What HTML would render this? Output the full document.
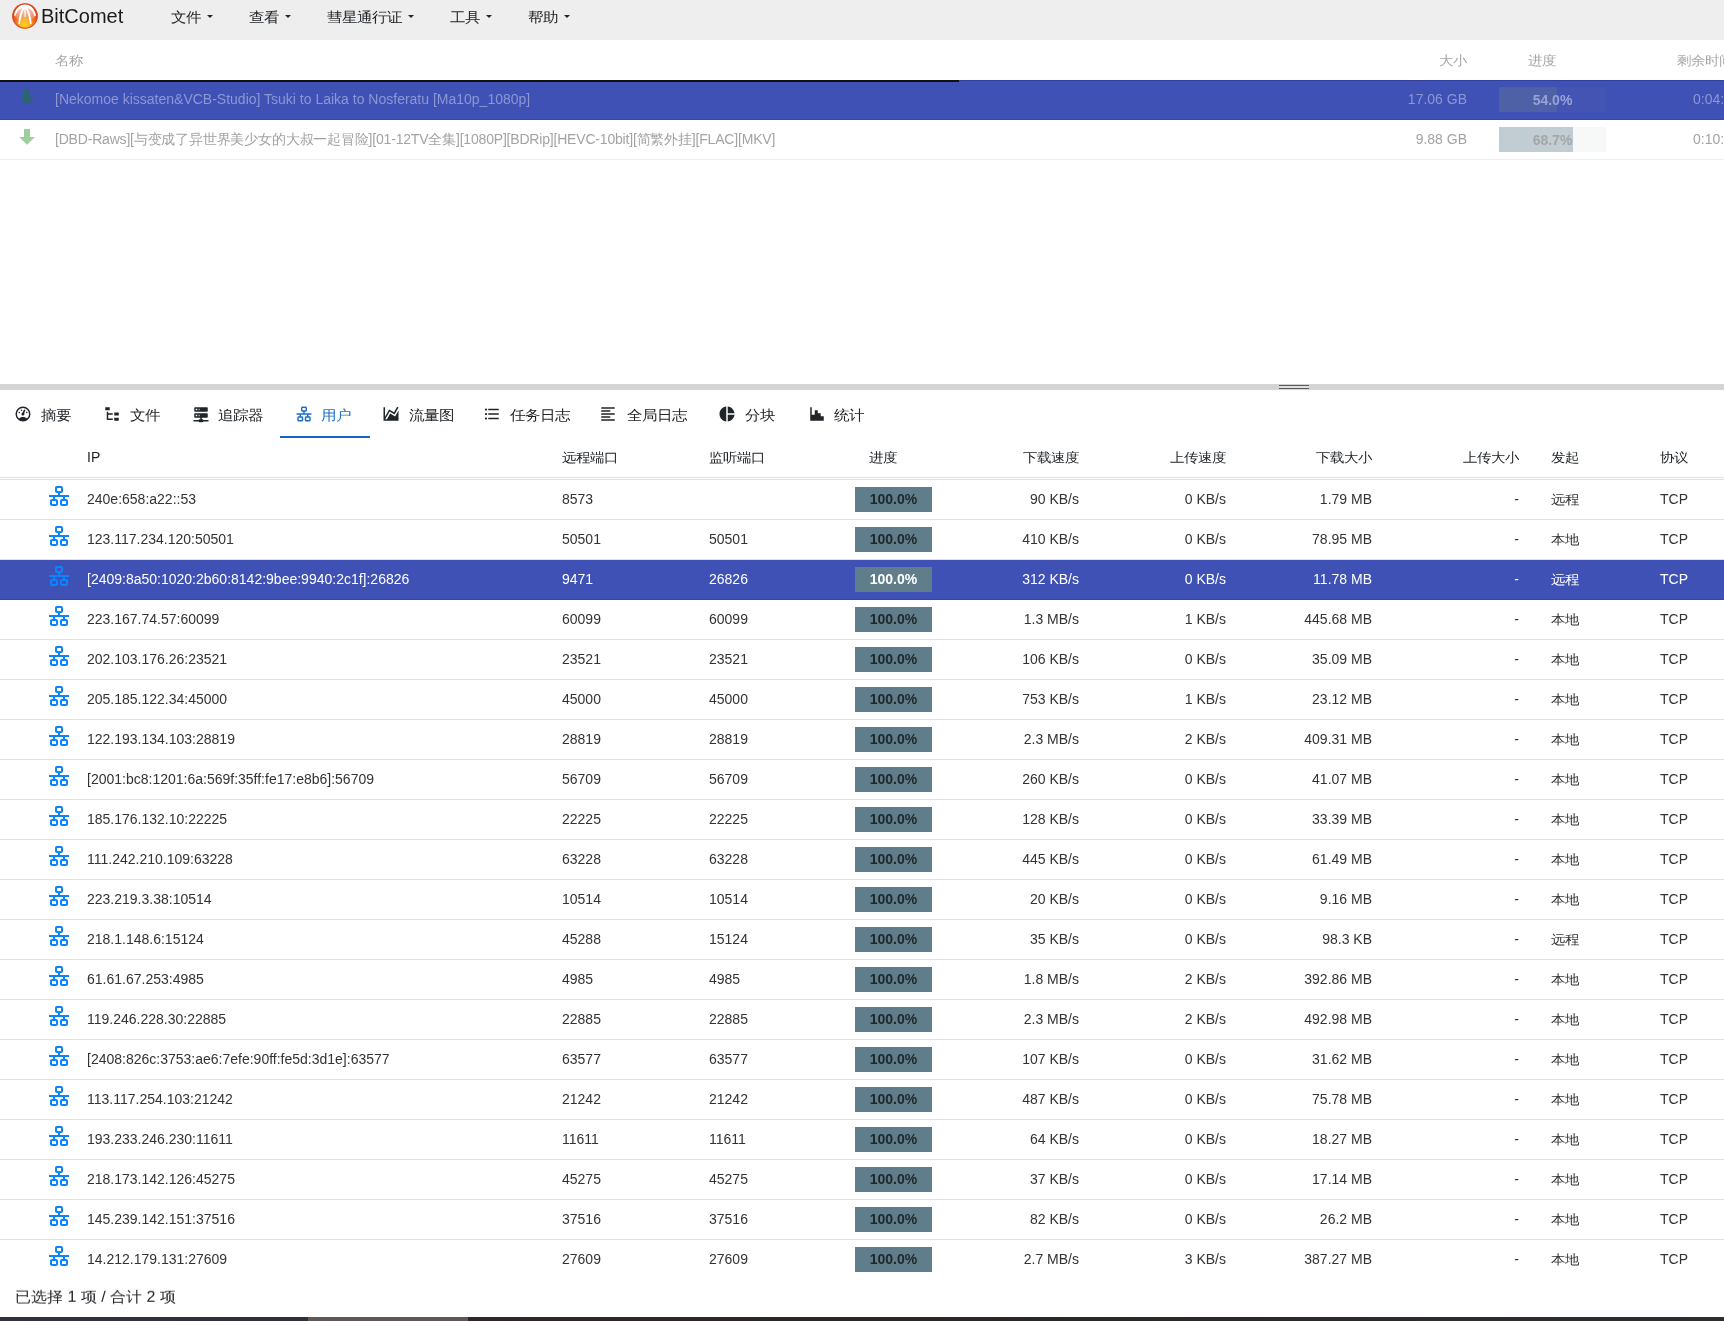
<!DOCTYPE html>
<html><head><meta charset="utf-8"><title>BitComet</title>
<style>
*{box-sizing:border-box;margin:0;padding:0}
html,body{width:1724px;height:1321px;overflow:hidden;background:#fff}
body{position:relative;font-family:"Liberation Sans",sans-serif;font-size:14px;color:#212529;-webkit-font-smoothing:antialiased}
#root{position:absolute;left:0;top:0;width:1724px;height:1321px;overflow:hidden;will-change:transform}
.abs{position:absolute;white-space:nowrap}
#nav{position:absolute;left:0;top:0;width:1724px;height:40px;background:#eeeeee}
#logo{position:absolute;left:12px;top:3px;width:26px;height:26px}
#brand{position:absolute;left:41px;top:4px;font-size:20px;line-height:24px;color:#1b1b1b}
.menu{position:absolute;top:8px;line-height:18px;font-size:15px;color:#212529}
.caret{display:inline-block;width:0;height:0;border-left:3px solid transparent;border-right:3px solid transparent;border-top:3.5px solid #212529;vertical-align:middle;margin-left:5.5px;position:relative;top:-2px}
#thead{position:absolute;left:0;top:40px;width:1724px;height:40px}
#thead span{position:absolute;top:12px;line-height:16px;color:#a6a6a6;white-space:nowrap}
#dragline{position:absolute;left:0;top:80px;width:959px;height:2px;background:#111}
.trow{position:absolute;left:0;width:1724px;height:40px}
.trow span{position:absolute;line-height:16px;top:11px;white-space:nowrap}
.tarrow{position:absolute;left:15px;width:24px;height:24px}
.tprog{position:absolute;left:1499px;top:7px;width:107px;height:25px}
.tprog .f{position:absolute;left:0;top:0;height:25px}
.tprog b{position:absolute;left:0;top:5px;width:107px;text-align:center;font-weight:bold;line-height:16px}
#split{position:absolute;left:0;top:384px;width:1724px;height:6px;background:#d4d4d4}
#grip{position:absolute;left:1279px;top:385px;width:30px;height:4px;border-top:1px solid #5a5a5a;border-bottom:1px solid #5a5a5a;background:#e0e0e0}
.tab{position:absolute;top:406px;height:18px;line-height:16px;white-space:nowrap}
.tab svg{position:absolute;top:0;width:16px;height:16px}
#uline{position:absolute;left:280px;top:436px;width:90px;height:2px;background:#1565c0}
#phead span{position:absolute;top:449px;line-height:16px;white-space:nowrap;color:#212529}
#hl1{position:absolute;left:0;top:477px;width:1724px;height:3px;border-top:1px solid #e0e0e0;border-bottom:1px solid #e0e0e0}
.row{position:absolute;left:0;width:1724px;height:40px;border-bottom:1px solid rgba(0,0,0,0.12);color:#333}
.row.sel{background:#3f51b5;color:#fff}
.pi{position:absolute;left:47px;top:4px;width:24px;height:24px;color:#0a84ff}
.row .c{position:absolute;top:11px;line-height:16px;white-space:nowrap}
.row .r{text-align:right}
.ip{left:87px}.rp{left:562px}.lp{left:709px}
.dl{right:645px}.ul{right:498px}.ds{right:352px}.us{right:205px}
.ori{left:1551px}.pr{left:1660px}
.pb{position:absolute;left:855px;top:7px;width:77px;height:25px;background:#607d8b;text-align:center;font-weight:bold;line-height:25px;color:#1e272c}
.row.sel .pb{color:#fff}
#foot{position:absolute;left:15px;top:1287px;line-height:20px;font-size:16px;color:#212529;transform:scaleY(0.92);transform-origin:0 60%}
#desk{position:absolute;left:0;top:1317px;width:1724px;height:4px;background:linear-gradient(90deg,#30333c 0px,#2f3139 308px,#615955 308px,#5f5854 468px,#302823 468px,#2d2724 900px,#2c2a2c 1300px,#2e2d30 1724px)}

#tline{position:absolute;left:959px;top:80px;width:765px;height:1px;background:#3041a0}

.cj{transform:scaleY(0.9);transform-origin:50% 55%}

.row.last{border-bottom:none}

</style></head>
<body><div id="root">
<div id="nav">
<svg id="logo" viewBox="0 0 26 26"><defs><radialGradient id="lg" cx="13" cy="21.5" r="14" gradientUnits="userSpaceOnUse"><stop offset="0" stop-color="#ffd82a"/><stop offset="0.3" stop-color="#fbb320"/><stop offset="0.65" stop-color="#ef7420"/><stop offset="1" stop-color="#e2461c"/></radialGradient><linearGradient id="lw" x1="0" y1="0" x2="0" y2="1"><stop offset="0" stop-color="#fff" stop-opacity="0.85"/><stop offset="0.5" stop-color="#fff" stop-opacity="0.5"/><stop offset="1" stop-color="#fff" stop-opacity="0"/></linearGradient></defs>
<circle cx="13" cy="13" r="12.4" fill="url(#lg)"/>
<path d="M2.5 14 C2.5 6 8 1.5 13 1.5 C18 1.5 23.5 6 23.5 14 C20 17 16 19 13 19 C10 19 6 17 2.5 14Z" fill="url(#lw)"/>
<g fill="#fff">
<path d="M13 1.4 C8 1.6 3 5.5 2 12.5 L3.6 12.8 C4.8 7.5 8.5 4.6 13 4.4Z"/>
<path d="M13 1.4 C18 1.6 23 5.5 24 12.8 L22.4 13 C21.2 7.6 17.5 4.6 13 4.4Z"/>
<path d="M11.4 3.6 C8.8 7.5 6.8 13 6.4 21 L8 21.2 C8.9 14 10.6 8.2 13 4.6Z"/>
<path d="M14.6 3.6 C17.2 7.5 19.2 13 19.6 21 L18 21.2 C17.1 14 15.4 8.2 13 4.6Z"/>
<path d="M12 3 L14 3 L13.6 14 L12.4 14Z" opacity="0.85"/>
</g>
<circle cx="13" cy="13" r="12.3" fill="none" stroke="#e0481c" stroke-width="1.1"/></svg>
<div id="brand">BitComet</div>
<div class="menu" style="left:171px"><span class="cj" style="display:inline-block">文件</span><i class="caret"></i></div>
<div class="menu" style="left:249px"><span class="cj" style="display:inline-block">查看</span><i class="caret"></i></div>
<div class="menu" style="left:327px"><span class="cj" style="display:inline-block">彗星通行证</span><i class="caret"></i></div>
<div class="menu" style="left:450px"><span class="cj" style="display:inline-block">工具</span><i class="caret"></i></div>
<div class="menu" style="left:528px"><span class="cj" style="display:inline-block">帮助</span><i class="caret"></i></div>
</div>
<div id="thead"><span class="cj" style="left:55px">名称</span><span class="cj" style="right:257px">大小</span><span class="cj" style="left:1528px">进度</span><span class="cj" style="left:1677px">剩余时间</span></div>
<div class="trow" style="top:80px;background:#3f51b5;border-bottom:1px solid #3949a8">
<svg class="tarrow" style="top:5px" viewBox="0 0 24 24"><path fill="#2a6670" d="M9 4h6v8h4.84L12 19.84 4.16 12H9z"/></svg>
<span style="left:55px;color:#8c97d3">[Nekomoe kissaten&amp;VCB-Studio] Tsuki to Laika to Nosferatu [Ma10p_1080p]</span>
<span style="right:257px;color:#8c97d3">17.06 GB</span>
<div class="tprog" style="background:#4354b3"><div class="f" style="width:58px;background:#4e60a6"></div><b style="color:#98a2d8">54.0%</b></div>
<span style="left:1693px;color:#8c97d3">0:04:</span>
</div>
<div class="trow" style="top:120px;border-bottom:1px solid #eeeeee">
<svg class="tarrow" style="top:5px" viewBox="0 0 24 24"><path fill="#9ccf9c" d="M9 4h6v8h4.84L12 19.84 4.16 12H9z"/></svg>
<span style="left:55px;color:#a3a3a3;letter-spacing:-0.19px">[DBD-Raws][与变成了异世界美少女的大叔一起冒险][01-12TV全集][1080P][BDRip][HEVC-10bit][简繁外挂][FLAC][MKV]</span>
<span style="right:257px;color:#a3a3a3">9.88 GB</span>
<div class="tprog" style="background:#f7f9f9"><div class="f" style="width:74px;background:#c1ccd3"></div><b style="color:#a6a6a6">68.7%</b></div>
<span style="left:1693px;color:#a3a3a3">0:10:</span>
</div>
<div id="dragline"></div><div id="tline"></div>
<div id="split"></div><div id="grip"></div>
<svg class="abs" style="left:14px;top:405px;width:18px;height:18px" viewBox="0 0 24 24"><path fill="#212529" d="M12 2A10 10 0 0 0 2 12a10 10 0 0 0 10 10 10 10 0 0 0 10-10A10 10 0 0 0 12 2m0 2a8 8 0 0 1 8 8c0 2.4-1 4.5-2.7 6-1.4-1.3-3.3-2-5.3-2s-3.8.7-5.3 2C5 16.5 4 14.4 4 12a8 8 0 0 1 8-8m2 1.89c-.38.01-.74.26-.9.65l-1.29 3.23-.1.23c-.71.13-1.3.6-1.57 1.26-.41 1.03.09 2.19 1.12 2.6s2.19-.09 2.6-1.12c.26-.66.14-1.42-.29-1.98l.1-.26 1.29-3.21.01-.03c.2-.51-.05-1.09-.56-1.3-.13-.05-.26-.07-.41-.07M10 6a1 1 0 0 0-1 1 1 1 0 0 0 1 1 1 1 0 0 0 1-1 1 1 0 0 0-1-1M7 9a1 1 0 0 0-1 1 1 1 0 0 0 1 1 1 1 0 0 0 1-1 1 1 0 0 0-1-1m10 0a1 1 0 0 0-1 1 1 1 0 0 0 1 1 1 1 0 0 0 1-1 1 1 0 0 0-1-1"/></svg><div class="abs cj" style="left:41px;top:406px;line-height:18px;font-size:15px;color:#212529">摘要</div>
<svg class="abs" style="left:103px;top:405px;width:18px;height:18px" viewBox="0 0 24 24"><path fill="#212529" d="M3 3h6v4H3zm12 7h6v4h-6zm0 7h6v4h-6zm-2-4H7v5h6v2H5V9h2v2h6z"/></svg><div class="abs cj" style="left:130px;top:406px;line-height:18px;font-size:15px;color:#212529">文件</div>
<svg class="abs" style="left:192px;top:405px;width:18px;height:18px" viewBox="0 0 24 24"><path fill="#212529" d="M13 19h1a1 1 0 0 1 1 1h7v2h-7a1 1 0 0 1-1 1h-4a1 1 0 0 1-1-1H2v-2h7a1 1 0 0 1 1-1h1v-2H4a1 1 0 0 1-1-1v-4a1 1 0 0 1 1-1h16a1 1 0 0 1 1 1v4a1 1 0 0 1-1 1h-7zM4 3h16a1 1 0 0 1 1 1v4a1 1 0 0 1-1 1H4a1 1 0 0 1-1-1V4a1 1 0 0 1 1-1m5 4h1V5H9zm0 8h1v-2H9zM5 5v2h2V5zm0 8v2h2v-2z"/></svg><div class="abs cj" style="left:218px;top:406px;line-height:18px;font-size:15px;color:#212529">追踪器</div>
<svg class="abs" style="left:295px;top:405px;width:18px;height:18px" viewBox="0 0 24 24"><path fill="#1e6fc8" d="M10 2c-1.11 0-2 .89-2 2v3c0 1.11.89 2 2 2h1v2H2v2h4v2H5c-1.11 0-2 .89-2 2v3c0 1.11.89 2 2 2h4c1.11 0 2-.89 2-2v-3c0-1.11-.89-2-2-2H8v-2h8v2h-1c-1.11 0-2 .89-2 2v3c0 1.11.89 2 2 2h4c1.11 0 2-.89 2-2v-3c0-1.11-.89-2-2-2h-1v-2h4v-2h-9V9h1c1.11 0 2-.89 2-2V4c0-1.11-.89-2-2-2zm0 2h4v3h-4zM5 17h4v3H5zm10 0h4v3h-4z"/></svg><div class="abs cj" style="left:321px;top:406px;line-height:18px;font-size:15px;color:#1e6fc8">用户</div>
<svg class="abs" style="left:382px;top:405px;width:18px;height:18px" viewBox="0 0 24 24"><path fill="#212529" d="M17.45 15.18 22 7.31V21H2V3h2v12.54L9.5 6 16 9.78l4.24-7.33 1.73 1-5.23 9.05-6.51-3.75L4.31 19h2.26l4.39-7.56z"/></svg><div class="abs cj" style="left:409px;top:406px;line-height:18px;font-size:15px;color:#212529">流量图</div>
<svg class="abs" style="left:483px;top:405px;width:18px;height:18px" viewBox="0 0 24 24"><path fill="#212529" d="M7 5h14v2H7zm0 8v-2h14v2zM4 4.5A1.5 1.5 0 0 1 5.5 6 1.5 1.5 0 0 1 4 7.5 1.5 1.5 0 0 1 2.5 6 1.5 1.5 0 0 1 4 4.5m0 6A1.5 1.5 0 0 1 5.5 12 1.5 1.5 0 0 1 4 13.5 1.5 1.5 0 0 1 2.5 12 1.5 1.5 0 0 1 4 10.5M7 19v-2h14v2zm-3-2.5A1.5 1.5 0 0 1 5.5 18 1.5 1.5 0 0 1 4 19.5 1.5 1.5 0 0 1 2.5 18 1.5 1.5 0 0 1 4 16.5"/></svg><div class="abs cj" style="left:510px;top:406px;line-height:18px;font-size:15px;color:#212529">任务日志</div>
<svg class="abs" style="left:599px;top:405px;width:18px;height:18px" viewBox="0 0 24 24"><path fill="#212529" d="M3 3h18v2H3zm0 4h12v2H3zm0 4h18v2H3zm0 4h12v2H3zm0 4h18v2H3z"/></svg><div class="abs cj" style="left:627px;top:406px;line-height:18px;font-size:15px;color:#212529">全局日志</div>
<svg class="abs" style="left:718px;top:405px;width:18px;height:18px" viewBox="0 0 24 24"><path fill="#212529" d="M11 2v20c-5.1-.5-9-4.8-9-10s3.9-9.5 9-10m2 0v9h9c-.5-4.8-4.2-8.5-9-9m0 11v9c4.7-.5 8.5-4.2 9-9z"/></svg><div class="abs cj" style="left:745px;top:406px;line-height:18px;font-size:15px;color:#212529">分块</div>
<svg class="abs" style="left:808px;top:405px;width:18px;height:18px" viewBox="0 0 24 24"><path fill="#212529" d="M3 3h2v10h4V7h4v4h4v4h4v6H3z"/></svg><div class="abs cj" style="left:834px;top:406px;line-height:18px;font-size:15px;color:#212529">统计</div>

<div id="uline"></div>
<div id="phead"><span style="left:87px">IP</span><span class="cj" style="left:562px">远程端口</span><span class="cj" style="left:709px">监听端口</span><span class="cj" style="left:869px">进度</span><span class="cj" style="right:645px">下载速度</span><span class="cj" style="right:498px">上传速度</span><span class="cj" style="right:352px">下载大小</span><span class="cj" style="right:205px">上传大小</span><span class="cj" style="left:1551px">发起</span><span class="cj" style="left:1660px">协议</span></div>
<div id="hl1"></div>
<div class="row" style="top:480px"><svg class="pi" viewBox="0 0 24 24"><path fill="currentColor" d="M10 2c-1.11 0-2 .89-2 2v3c0 1.11.89 2 2 2h1v2H2v2h4v2H5c-1.11 0-2 .89-2 2v3c0 1.11.89 2 2 2h4c1.11 0 2-.89 2-2v-3c0-1.11-.89-2-2-2H8v-2h8v2h-1c-1.11 0-2 .89-2 2v3c0 1.11.89 2 2 2h4c1.11 0 2-.89 2-2v-3c0-1.11-.89-2-2-2h-1v-2h4v-2h-9V9h1c1.11 0 2-.89 2-2V4c0-1.11-.89-2-2-2zm0 2h4v3h-4zM5 17h4v3H5zm10 0h4v3h-4z"/></svg><span class="c ip">240e:658:a22::53</span><span class="c rp">8573</span><span class="c lp"></span><span class="pb">100.0%</span><span class="c r dl">90 KB/s</span><span class="c r ul">0 KB/s</span><span class="c r ds">1.79 MB</span><span class="c r us">-</span><span class="c ori cj">远程</span><span class="c pr">TCP</span></div>
<div class="row" style="top:520px"><svg class="pi" viewBox="0 0 24 24"><path fill="currentColor" d="M10 2c-1.11 0-2 .89-2 2v3c0 1.11.89 2 2 2h1v2H2v2h4v2H5c-1.11 0-2 .89-2 2v3c0 1.11.89 2 2 2h4c1.11 0 2-.89 2-2v-3c0-1.11-.89-2-2-2H8v-2h8v2h-1c-1.11 0-2 .89-2 2v3c0 1.11.89 2 2 2h4c1.11 0 2-.89 2-2v-3c0-1.11-.89-2-2-2h-1v-2h4v-2h-9V9h1c1.11 0 2-.89 2-2V4c0-1.11-.89-2-2-2zm0 2h4v3h-4zM5 17h4v3H5zm10 0h4v3h-4z"/></svg><span class="c ip">123.117.234.120:50501</span><span class="c rp">50501</span><span class="c lp">50501</span><span class="pb">100.0%</span><span class="c r dl">410 KB/s</span><span class="c r ul">0 KB/s</span><span class="c r ds">78.95 MB</span><span class="c r us">-</span><span class="c ori cj">本地</span><span class="c pr">TCP</span></div>
<div class="row sel" style="top:560px"><svg class="pi" viewBox="0 0 24 24"><path fill="currentColor" d="M10 2c-1.11 0-2 .89-2 2v3c0 1.11.89 2 2 2h1v2H2v2h4v2H5c-1.11 0-2 .89-2 2v3c0 1.11.89 2 2 2h4c1.11 0 2-.89 2-2v-3c0-1.11-.89-2-2-2H8v-2h8v2h-1c-1.11 0-2 .89-2 2v3c0 1.11.89 2 2 2h4c1.11 0 2-.89 2-2v-3c0-1.11-.89-2-2-2h-1v-2h4v-2h-9V9h1c1.11 0 2-.89 2-2V4c0-1.11-.89-2-2-2zm0 2h4v3h-4zM5 17h4v3H5zm10 0h4v3h-4z"/></svg><span class="c ip">[2409:8a50:1020:2b60:8142:9bee:9940:2c1f]:26826</span><span class="c rp">9471</span><span class="c lp">26826</span><span class="pb">100.0%</span><span class="c r dl">312 KB/s</span><span class="c r ul">0 KB/s</span><span class="c r ds">11.78 MB</span><span class="c r us">-</span><span class="c ori cj">远程</span><span class="c pr">TCP</span></div>
<div class="row" style="top:600px"><svg class="pi" viewBox="0 0 24 24"><path fill="currentColor" d="M10 2c-1.11 0-2 .89-2 2v3c0 1.11.89 2 2 2h1v2H2v2h4v2H5c-1.11 0-2 .89-2 2v3c0 1.11.89 2 2 2h4c1.11 0 2-.89 2-2v-3c0-1.11-.89-2-2-2H8v-2h8v2h-1c-1.11 0-2 .89-2 2v3c0 1.11.89 2 2 2h4c1.11 0 2-.89 2-2v-3c0-1.11-.89-2-2-2h-1v-2h4v-2h-9V9h1c1.11 0 2-.89 2-2V4c0-1.11-.89-2-2-2zm0 2h4v3h-4zM5 17h4v3H5zm10 0h4v3h-4z"/></svg><span class="c ip">223.167.74.57:60099</span><span class="c rp">60099</span><span class="c lp">60099</span><span class="pb">100.0%</span><span class="c r dl">1.3 MB/s</span><span class="c r ul">1 KB/s</span><span class="c r ds">445.68 MB</span><span class="c r us">-</span><span class="c ori cj">本地</span><span class="c pr">TCP</span></div>
<div class="row" style="top:640px"><svg class="pi" viewBox="0 0 24 24"><path fill="currentColor" d="M10 2c-1.11 0-2 .89-2 2v3c0 1.11.89 2 2 2h1v2H2v2h4v2H5c-1.11 0-2 .89-2 2v3c0 1.11.89 2 2 2h4c1.11 0 2-.89 2-2v-3c0-1.11-.89-2-2-2H8v-2h8v2h-1c-1.11 0-2 .89-2 2v3c0 1.11.89 2 2 2h4c1.11 0 2-.89 2-2v-3c0-1.11-.89-2-2-2h-1v-2h4v-2h-9V9h1c1.11 0 2-.89 2-2V4c0-1.11-.89-2-2-2zm0 2h4v3h-4zM5 17h4v3H5zm10 0h4v3h-4z"/></svg><span class="c ip">202.103.176.26:23521</span><span class="c rp">23521</span><span class="c lp">23521</span><span class="pb">100.0%</span><span class="c r dl">106 KB/s</span><span class="c r ul">0 KB/s</span><span class="c r ds">35.09 MB</span><span class="c r us">-</span><span class="c ori cj">本地</span><span class="c pr">TCP</span></div>
<div class="row" style="top:680px"><svg class="pi" viewBox="0 0 24 24"><path fill="currentColor" d="M10 2c-1.11 0-2 .89-2 2v3c0 1.11.89 2 2 2h1v2H2v2h4v2H5c-1.11 0-2 .89-2 2v3c0 1.11.89 2 2 2h4c1.11 0 2-.89 2-2v-3c0-1.11-.89-2-2-2H8v-2h8v2h-1c-1.11 0-2 .89-2 2v3c0 1.11.89 2 2 2h4c1.11 0 2-.89 2-2v-3c0-1.11-.89-2-2-2h-1v-2h4v-2h-9V9h1c1.11 0 2-.89 2-2V4c0-1.11-.89-2-2-2zm0 2h4v3h-4zM5 17h4v3H5zm10 0h4v3h-4z"/></svg><span class="c ip">205.185.122.34:45000</span><span class="c rp">45000</span><span class="c lp">45000</span><span class="pb">100.0%</span><span class="c r dl">753 KB/s</span><span class="c r ul">1 KB/s</span><span class="c r ds">23.12 MB</span><span class="c r us">-</span><span class="c ori cj">本地</span><span class="c pr">TCP</span></div>
<div class="row" style="top:720px"><svg class="pi" viewBox="0 0 24 24"><path fill="currentColor" d="M10 2c-1.11 0-2 .89-2 2v3c0 1.11.89 2 2 2h1v2H2v2h4v2H5c-1.11 0-2 .89-2 2v3c0 1.11.89 2 2 2h4c1.11 0 2-.89 2-2v-3c0-1.11-.89-2-2-2H8v-2h8v2h-1c-1.11 0-2 .89-2 2v3c0 1.11.89 2 2 2h4c1.11 0 2-.89 2-2v-3c0-1.11-.89-2-2-2h-1v-2h4v-2h-9V9h1c1.11 0 2-.89 2-2V4c0-1.11-.89-2-2-2zm0 2h4v3h-4zM5 17h4v3H5zm10 0h4v3h-4z"/></svg><span class="c ip">122.193.134.103:28819</span><span class="c rp">28819</span><span class="c lp">28819</span><span class="pb">100.0%</span><span class="c r dl">2.3 MB/s</span><span class="c r ul">2 KB/s</span><span class="c r ds">409.31 MB</span><span class="c r us">-</span><span class="c ori cj">本地</span><span class="c pr">TCP</span></div>
<div class="row" style="top:760px"><svg class="pi" viewBox="0 0 24 24"><path fill="currentColor" d="M10 2c-1.11 0-2 .89-2 2v3c0 1.11.89 2 2 2h1v2H2v2h4v2H5c-1.11 0-2 .89-2 2v3c0 1.11.89 2 2 2h4c1.11 0 2-.89 2-2v-3c0-1.11-.89-2-2-2H8v-2h8v2h-1c-1.11 0-2 .89-2 2v3c0 1.11.89 2 2 2h4c1.11 0 2-.89 2-2v-3c0-1.11-.89-2-2-2h-1v-2h4v-2h-9V9h1c1.11 0 2-.89 2-2V4c0-1.11-.89-2-2-2zm0 2h4v3h-4zM5 17h4v3H5zm10 0h4v3h-4z"/></svg><span class="c ip">[2001:bc8:1201:6a:569f:35ff:fe17:e8b6]:56709</span><span class="c rp">56709</span><span class="c lp">56709</span><span class="pb">100.0%</span><span class="c r dl">260 KB/s</span><span class="c r ul">0 KB/s</span><span class="c r ds">41.07 MB</span><span class="c r us">-</span><span class="c ori cj">本地</span><span class="c pr">TCP</span></div>
<div class="row" style="top:800px"><svg class="pi" viewBox="0 0 24 24"><path fill="currentColor" d="M10 2c-1.11 0-2 .89-2 2v3c0 1.11.89 2 2 2h1v2H2v2h4v2H5c-1.11 0-2 .89-2 2v3c0 1.11.89 2 2 2h4c1.11 0 2-.89 2-2v-3c0-1.11-.89-2-2-2H8v-2h8v2h-1c-1.11 0-2 .89-2 2v3c0 1.11.89 2 2 2h4c1.11 0 2-.89 2-2v-3c0-1.11-.89-2-2-2h-1v-2h4v-2h-9V9h1c1.11 0 2-.89 2-2V4c0-1.11-.89-2-2-2zm0 2h4v3h-4zM5 17h4v3H5zm10 0h4v3h-4z"/></svg><span class="c ip">185.176.132.10:22225</span><span class="c rp">22225</span><span class="c lp">22225</span><span class="pb">100.0%</span><span class="c r dl">128 KB/s</span><span class="c r ul">0 KB/s</span><span class="c r ds">33.39 MB</span><span class="c r us">-</span><span class="c ori cj">本地</span><span class="c pr">TCP</span></div>
<div class="row" style="top:840px"><svg class="pi" viewBox="0 0 24 24"><path fill="currentColor" d="M10 2c-1.11 0-2 .89-2 2v3c0 1.11.89 2 2 2h1v2H2v2h4v2H5c-1.11 0-2 .89-2 2v3c0 1.11.89 2 2 2h4c1.11 0 2-.89 2-2v-3c0-1.11-.89-2-2-2H8v-2h8v2h-1c-1.11 0-2 .89-2 2v3c0 1.11.89 2 2 2h4c1.11 0 2-.89 2-2v-3c0-1.11-.89-2-2-2h-1v-2h4v-2h-9V9h1c1.11 0 2-.89 2-2V4c0-1.11-.89-2-2-2zm0 2h4v3h-4zM5 17h4v3H5zm10 0h4v3h-4z"/></svg><span class="c ip">111.242.210.109:63228</span><span class="c rp">63228</span><span class="c lp">63228</span><span class="pb">100.0%</span><span class="c r dl">445 KB/s</span><span class="c r ul">0 KB/s</span><span class="c r ds">61.49 MB</span><span class="c r us">-</span><span class="c ori cj">本地</span><span class="c pr">TCP</span></div>
<div class="row" style="top:880px"><svg class="pi" viewBox="0 0 24 24"><path fill="currentColor" d="M10 2c-1.11 0-2 .89-2 2v3c0 1.11.89 2 2 2h1v2H2v2h4v2H5c-1.11 0-2 .89-2 2v3c0 1.11.89 2 2 2h4c1.11 0 2-.89 2-2v-3c0-1.11-.89-2-2-2H8v-2h8v2h-1c-1.11 0-2 .89-2 2v3c0 1.11.89 2 2 2h4c1.11 0 2-.89 2-2v-3c0-1.11-.89-2-2-2h-1v-2h4v-2h-9V9h1c1.11 0 2-.89 2-2V4c0-1.11-.89-2-2-2zm0 2h4v3h-4zM5 17h4v3H5zm10 0h4v3h-4z"/></svg><span class="c ip">223.219.3.38:10514</span><span class="c rp">10514</span><span class="c lp">10514</span><span class="pb">100.0%</span><span class="c r dl">20 KB/s</span><span class="c r ul">0 KB/s</span><span class="c r ds">9.16 MB</span><span class="c r us">-</span><span class="c ori cj">本地</span><span class="c pr">TCP</span></div>
<div class="row" style="top:920px"><svg class="pi" viewBox="0 0 24 24"><path fill="currentColor" d="M10 2c-1.11 0-2 .89-2 2v3c0 1.11.89 2 2 2h1v2H2v2h4v2H5c-1.11 0-2 .89-2 2v3c0 1.11.89 2 2 2h4c1.11 0 2-.89 2-2v-3c0-1.11-.89-2-2-2H8v-2h8v2h-1c-1.11 0-2 .89-2 2v3c0 1.11.89 2 2 2h4c1.11 0 2-.89 2-2v-3c0-1.11-.89-2-2-2h-1v-2h4v-2h-9V9h1c1.11 0 2-.89 2-2V4c0-1.11-.89-2-2-2zm0 2h4v3h-4zM5 17h4v3H5zm10 0h4v3h-4z"/></svg><span class="c ip">218.1.148.6:15124</span><span class="c rp">45288</span><span class="c lp">15124</span><span class="pb">100.0%</span><span class="c r dl">35 KB/s</span><span class="c r ul">0 KB/s</span><span class="c r ds">98.3 KB</span><span class="c r us">-</span><span class="c ori cj">远程</span><span class="c pr">TCP</span></div>
<div class="row" style="top:960px"><svg class="pi" viewBox="0 0 24 24"><path fill="currentColor" d="M10 2c-1.11 0-2 .89-2 2v3c0 1.11.89 2 2 2h1v2H2v2h4v2H5c-1.11 0-2 .89-2 2v3c0 1.11.89 2 2 2h4c1.11 0 2-.89 2-2v-3c0-1.11-.89-2-2-2H8v-2h8v2h-1c-1.11 0-2 .89-2 2v3c0 1.11.89 2 2 2h4c1.11 0 2-.89 2-2v-3c0-1.11-.89-2-2-2h-1v-2h4v-2h-9V9h1c1.11 0 2-.89 2-2V4c0-1.11-.89-2-2-2zm0 2h4v3h-4zM5 17h4v3H5zm10 0h4v3h-4z"/></svg><span class="c ip">61.61.67.253:4985</span><span class="c rp">4985</span><span class="c lp">4985</span><span class="pb">100.0%</span><span class="c r dl">1.8 MB/s</span><span class="c r ul">2 KB/s</span><span class="c r ds">392.86 MB</span><span class="c r us">-</span><span class="c ori cj">本地</span><span class="c pr">TCP</span></div>
<div class="row" style="top:1000px"><svg class="pi" viewBox="0 0 24 24"><path fill="currentColor" d="M10 2c-1.11 0-2 .89-2 2v3c0 1.11.89 2 2 2h1v2H2v2h4v2H5c-1.11 0-2 .89-2 2v3c0 1.11.89 2 2 2h4c1.11 0 2-.89 2-2v-3c0-1.11-.89-2-2-2H8v-2h8v2h-1c-1.11 0-2 .89-2 2v3c0 1.11.89 2 2 2h4c1.11 0 2-.89 2-2v-3c0-1.11-.89-2-2-2h-1v-2h4v-2h-9V9h1c1.11 0 2-.89 2-2V4c0-1.11-.89-2-2-2zm0 2h4v3h-4zM5 17h4v3H5zm10 0h4v3h-4z"/></svg><span class="c ip">119.246.228.30:22885</span><span class="c rp">22885</span><span class="c lp">22885</span><span class="pb">100.0%</span><span class="c r dl">2.3 MB/s</span><span class="c r ul">2 KB/s</span><span class="c r ds">492.98 MB</span><span class="c r us">-</span><span class="c ori cj">本地</span><span class="c pr">TCP</span></div>
<div class="row" style="top:1040px"><svg class="pi" viewBox="0 0 24 24"><path fill="currentColor" d="M10 2c-1.11 0-2 .89-2 2v3c0 1.11.89 2 2 2h1v2H2v2h4v2H5c-1.11 0-2 .89-2 2v3c0 1.11.89 2 2 2h4c1.11 0 2-.89 2-2v-3c0-1.11-.89-2-2-2H8v-2h8v2h-1c-1.11 0-2 .89-2 2v3c0 1.11.89 2 2 2h4c1.11 0 2-.89 2-2v-3c0-1.11-.89-2-2-2h-1v-2h4v-2h-9V9h1c1.11 0 2-.89 2-2V4c0-1.11-.89-2-2-2zm0 2h4v3h-4zM5 17h4v3H5zm10 0h4v3h-4z"/></svg><span class="c ip">[2408:826c:3753:ae6:7efe:90ff:fe5d:3d1e]:63577</span><span class="c rp">63577</span><span class="c lp">63577</span><span class="pb">100.0%</span><span class="c r dl">107 KB/s</span><span class="c r ul">0 KB/s</span><span class="c r ds">31.62 MB</span><span class="c r us">-</span><span class="c ori cj">本地</span><span class="c pr">TCP</span></div>
<div class="row" style="top:1080px"><svg class="pi" viewBox="0 0 24 24"><path fill="currentColor" d="M10 2c-1.11 0-2 .89-2 2v3c0 1.11.89 2 2 2h1v2H2v2h4v2H5c-1.11 0-2 .89-2 2v3c0 1.11.89 2 2 2h4c1.11 0 2-.89 2-2v-3c0-1.11-.89-2-2-2H8v-2h8v2h-1c-1.11 0-2 .89-2 2v3c0 1.11.89 2 2 2h4c1.11 0 2-.89 2-2v-3c0-1.11-.89-2-2-2h-1v-2h4v-2h-9V9h1c1.11 0 2-.89 2-2V4c0-1.11-.89-2-2-2zm0 2h4v3h-4zM5 17h4v3H5zm10 0h4v3h-4z"/></svg><span class="c ip">113.117.254.103:21242</span><span class="c rp">21242</span><span class="c lp">21242</span><span class="pb">100.0%</span><span class="c r dl">487 KB/s</span><span class="c r ul">0 KB/s</span><span class="c r ds">75.78 MB</span><span class="c r us">-</span><span class="c ori cj">本地</span><span class="c pr">TCP</span></div>
<div class="row" style="top:1120px"><svg class="pi" viewBox="0 0 24 24"><path fill="currentColor" d="M10 2c-1.11 0-2 .89-2 2v3c0 1.11.89 2 2 2h1v2H2v2h4v2H5c-1.11 0-2 .89-2 2v3c0 1.11.89 2 2 2h4c1.11 0 2-.89 2-2v-3c0-1.11-.89-2-2-2H8v-2h8v2h-1c-1.11 0-2 .89-2 2v3c0 1.11.89 2 2 2h4c1.11 0 2-.89 2-2v-3c0-1.11-.89-2-2-2h-1v-2h4v-2h-9V9h1c1.11 0 2-.89 2-2V4c0-1.11-.89-2-2-2zm0 2h4v3h-4zM5 17h4v3H5zm10 0h4v3h-4z"/></svg><span class="c ip">193.233.246.230:11611</span><span class="c rp">11611</span><span class="c lp">11611</span><span class="pb">100.0%</span><span class="c r dl">64 KB/s</span><span class="c r ul">0 KB/s</span><span class="c r ds">18.27 MB</span><span class="c r us">-</span><span class="c ori cj">本地</span><span class="c pr">TCP</span></div>
<div class="row" style="top:1160px"><svg class="pi" viewBox="0 0 24 24"><path fill="currentColor" d="M10 2c-1.11 0-2 .89-2 2v3c0 1.11.89 2 2 2h1v2H2v2h4v2H5c-1.11 0-2 .89-2 2v3c0 1.11.89 2 2 2h4c1.11 0 2-.89 2-2v-3c0-1.11-.89-2-2-2H8v-2h8v2h-1c-1.11 0-2 .89-2 2v3c0 1.11.89 2 2 2h4c1.11 0 2-.89 2-2v-3c0-1.11-.89-2-2-2h-1v-2h4v-2h-9V9h1c1.11 0 2-.89 2-2V4c0-1.11-.89-2-2-2zm0 2h4v3h-4zM5 17h4v3H5zm10 0h4v3h-4z"/></svg><span class="c ip">218.173.142.126:45275</span><span class="c rp">45275</span><span class="c lp">45275</span><span class="pb">100.0%</span><span class="c r dl">37 KB/s</span><span class="c r ul">0 KB/s</span><span class="c r ds">17.14 MB</span><span class="c r us">-</span><span class="c ori cj">本地</span><span class="c pr">TCP</span></div>
<div class="row" style="top:1200px"><svg class="pi" viewBox="0 0 24 24"><path fill="currentColor" d="M10 2c-1.11 0-2 .89-2 2v3c0 1.11.89 2 2 2h1v2H2v2h4v2H5c-1.11 0-2 .89-2 2v3c0 1.11.89 2 2 2h4c1.11 0 2-.89 2-2v-3c0-1.11-.89-2-2-2H8v-2h8v2h-1c-1.11 0-2 .89-2 2v3c0 1.11.89 2 2 2h4c1.11 0 2-.89 2-2v-3c0-1.11-.89-2-2-2h-1v-2h4v-2h-9V9h1c1.11 0 2-.89 2-2V4c0-1.11-.89-2-2-2zm0 2h4v3h-4zM5 17h4v3H5zm10 0h4v3h-4z"/></svg><span class="c ip">145.239.142.151:37516</span><span class="c rp">37516</span><span class="c lp">37516</span><span class="pb">100.0%</span><span class="c r dl">82 KB/s</span><span class="c r ul">0 KB/s</span><span class="c r ds">26.2 MB</span><span class="c r us">-</span><span class="c ori cj">本地</span><span class="c pr">TCP</span></div>
<div class="row last" style="top:1240px"><svg class="pi" viewBox="0 0 24 24"><path fill="currentColor" d="M10 2c-1.11 0-2 .89-2 2v3c0 1.11.89 2 2 2h1v2H2v2h4v2H5c-1.11 0-2 .89-2 2v3c0 1.11.89 2 2 2h4c1.11 0 2-.89 2-2v-3c0-1.11-.89-2-2-2H8v-2h8v2h-1c-1.11 0-2 .89-2 2v3c0 1.11.89 2 2 2h4c1.11 0 2-.89 2-2v-3c0-1.11-.89-2-2-2h-1v-2h4v-2h-9V9h1c1.11 0 2-.89 2-2V4c0-1.11-.89-2-2-2zm0 2h4v3h-4zM5 17h4v3H5zm10 0h4v3h-4z"/></svg><span class="c ip">14.212.179.131:27609</span><span class="c rp">27609</span><span class="c lp">27609</span><span class="pb">100.0%</span><span class="c r dl">2.7 MB/s</span><span class="c r ul">3 KB/s</span><span class="c r ds">387.27 MB</span><span class="c r us">-</span><span class="c ori cj">本地</span><span class="c pr">TCP</span></div>
<div id="foot">已选择 1 项 / 合计 2 项</div>
<div id="desk"></div>
</div></body></html>
